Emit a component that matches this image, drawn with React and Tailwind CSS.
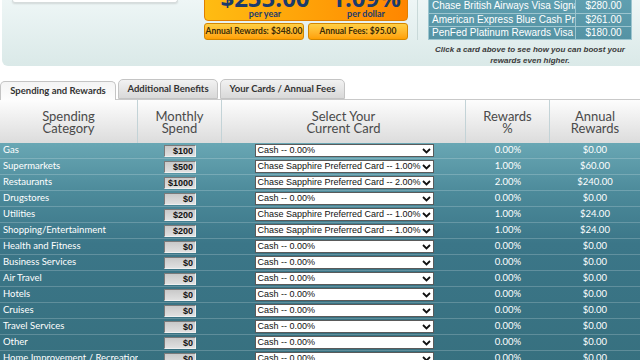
import React from "react";

const cards = [
  { name: "Chase British Airways Visa Signature", value: "$280.00" },
  { name: "American Express Blue Cash Preferred", value: "$261.00" },
  { name: "PenFed Platinum Rewards Visa Signature", value: "$180.00" },
];

const CSP1 = "Chase Sapphire Preferred Card -- 1.00%";
const CASH = "Cash -- 0.00%";

const rows = [
  { cat: "Gas", spend: "$100", card: CASH, pct: "0.00%", amt: "$0.00" },
  { cat: "Supermarkets", spend: "$500", card: CSP1, pct: "1.00%", amt: "$60.00" },
  { cat: "Restaurants", spend: "$1000", card: "Chase Sapphire Preferred Card -- 2.00%", pct: "2.00%", amt: "$240.00" },
  { cat: "Drugstores", spend: "$0", card: CASH, pct: "0.00%", amt: "$0.00" },
  { cat: "Utilities", spend: "$200", card: CSP1, pct: "1.00%", amt: "$24.00" },
  { cat: "Shopping/Entertainment", spend: "$200", card: CSP1, pct: "1.00%", amt: "$24.00" },
  { cat: "Health and Fitness", spend: "$0", card: CASH, pct: "0.00%", amt: "$0.00" },
  { cat: "Business Services", spend: "$0", card: CASH, pct: "0.00%", amt: "$0.00" },
  { cat: "Air Travel", spend: "$0", card: CASH, pct: "0.00%", amt: "$0.00" },
  { cat: "Hotels", spend: "$0", card: CASH, pct: "0.00%", amt: "$0.00" },
  { cat: "Cruises", spend: "$0", card: CASH, pct: "0.00%", amt: "$0.00" },
  { cat: "Travel Services", spend: "$0", card: CASH, pct: "0.00%", amt: "$0.00" },
  { cat: "Other", spend: "$0", card: CASH, pct: "0.00%", amt: "$0.00" },
  { cat: "Home Improvement / Recreation", spend: "$0", card: CASH, pct: "0.00%", amt: "$0.00" },
];

const Chevron = () => (
  <svg width="9" height="6" viewBox="0 0 9 6" className="shrink-0">
    <path d="M1 1 L4.5 4.5 L8 1" fill="none" stroke="#111" strokeWidth="1.8" />
  </svg>
);

const TopPanel = () => (
  <div className="ml-[2px] h-[66px] rounded-bl-[6px] bg-gradient-to-b from-[#eef6f6] to-[#dae9e8] flex">
    <div className="w-[202px] shrink-0">
      <div className="ml-[10px] w-[166px] h-[3px] bg-white border-x border-b border-[#d6dcdc] rounded-b-[4px] shadow-[0_1px_2px_rgba(0,0,0,0.12)]" />
    </div>

    <div className="w-[204px] shrink-0 flex flex-col">
      <div className="-mt-[20px] h-[41px] pt-[5px] rounded-b-[4px] border border-[#e07f00] bg-gradient-to-r from-[#ffbc12] via-[#ffa208] to-[#ff8600] flex text-[#1b3b6c] font-bold overflow-hidden">
        <div className="w-[120px] flex flex-col items-center">
          <div className="text-[24px] leading-[24px] font-['Open_Sans',sans-serif]">$255.00</div>
          <div className="text-[9px] leading-[10px] -mt-[1px]">per year</div>
        </div>
        <div className="flex-1 flex flex-col items-center">
          <div className="text-[24px] leading-[24px] font-['Open_Sans',sans-serif]">1.09%</div>
          <div className="text-[9px] leading-[10px] -mt-[1px]">per dollar</div>
        </div>
      </div>
      <div className="mt-[2px] flex gap-[4px]">
        <div className="w-[100px] h-[17px] rounded-[3px] border border-[#d48600] bg-gradient-to-b from-[#ffd044] to-[#ffa000] flex items-center justify-center whitespace-nowrap text-[8.5px] font-bold text-[#3a2a05]">
          Annual Rewards: $348.00
        </div>
        <div className="w-[100px] h-[17px] rounded-[3px] border border-[#d48600] bg-gradient-to-b from-[#ffd044] to-[#ffa000] flex items-center justify-center whitespace-nowrap text-[8.5px] font-bold text-[#3a2a05]">
          Annual Fees: $95.00
        </div>
      </div>
    </div>

    <div className="w-[10px] shrink-0 flex justify-end">
      <div className="w-px h-[40px] bg-[#c9d9d9]" />
    </div>

    <div className="ml-[10px] w-[204px] shrink-0 flex flex-col">
      <div className="-mt-[1px] border border-[#9cc5cf] bg-gradient-to-b from-[#5f9fb0] to-[#5593a4] font-['Liberation_Sans',sans-serif] text-[10px] text-white">
        {cards.map((c, i) => (
          <div key={c.name} className={`flex h-[13px] ${i > 0 ? "border-t border-[#9cc5cf]" : ""}`}>
            <div className="w-[147px] pl-[3px] leading-[12px] whitespace-nowrap overflow-hidden border-r border-[#9cc5cf]">
              {c.name}
            </div>
            <div className="flex-1 text-center leading-[12px]">{c.value}</div>
          </div>
        ))}
      </div>
      <div className="mt-[4px] text-center whitespace-nowrap font-['Liberation_Sans',sans-serif] text-[8px] leading-[11px] font-bold italic text-[#3a3a3a]">
        Click a card above to see how you can boost your
        <br />
        rewards even higher.
      </div>
    </div>
  </div>
);

const Tabs = () => (
  <div className="mt-[14px] h-[20px] flex items-end gap-[2px] border-b border-[#c9c9c9]">
    <div className="relative -mb-px w-[116px] h-[19px] rounded-t-[5px] border border-b-0 border-[#c4c4c4] bg-gradient-to-b from-[#f4f4f4] to-[#fdfdfd] flex items-center justify-center whitespace-nowrap text-[9.5px] font-bold text-[#333]">
      Spending and Rewards
    </div>
    <div className="w-[100px] h-[20px] rounded-t-[5px] border border-[#c4c4c4] bg-gradient-to-b from-[#f2f2f2] to-[#d9d9d9] flex items-center justify-center whitespace-nowrap text-[9.5px] font-bold text-[#333]">
      Additional Benefits
    </div>
    <div className="w-[125px] h-[20px] rounded-t-[5px] border border-[#c4c4c4] bg-gradient-to-b from-[#f2f2f2] to-[#d9d9d9] flex items-center justify-center whitespace-nowrap text-[9.5px] font-bold text-[#333]">
      Your Cards / Annual Fees
    </div>
  </div>
);

const Header = () => (
  <div className="h-[43px] flex bg-gradient-to-b from-[#fdfdfd] to-[#dcdcdc] text-[13px] leading-[12px] text-[#4a4a4a] text-center">
    <div className="w-[138px] flex items-center justify-center border-r border-[#c3d3d7]">Spending<br />Category</div>
    <div className="w-[84px] flex items-center justify-center border-r border-[#c3d3d7]">Monthly<br />Spend</div>
    <div className="w-[244px] flex items-center justify-center border-r border-[#c3d3d7]">Select Your<br />Current Card</div>
    <div className="w-[84px] flex items-center justify-center border-r border-[#c3d3d7]">Rewards<br />%</div>
    <div className="flex-1 flex items-center justify-center">Annual<br />Rewards</div>
  </div>
);

const Row = ({ r }) => (
  <div className="h-[16px] flex items-center border-b border-[#ffffff]/20 text-white text-[9.5px]">
    <div className="w-[138px] pl-[3px] whitespace-nowrap overflow-hidden">{r.cat}</div>
    <div className="w-[84px] flex justify-center">
      <input
        readOnly
        value={r.spend}
        className="w-[32px] h-[12px] bg-gradient-to-b from-[#c9c9c9] to-[#e0e0e0] border border-t-[#7a7a7a] border-l-[#7a7a7a] border-b-[#f0f0f0] border-r-[#f0f0f0] text-right pr-[2px] text-[9px] leading-[10px] font-bold text-[#111] font-['Liberation_Sans',sans-serif] outline-none"
      />
    </div>
    <div className="w-[244px] flex justify-center">
      <div className="w-[179px] h-[13px] bg-white border border-[#5a5a5a] flex items-center justify-between pl-[2px] pr-[2px] font-['Liberation_Sans',sans-serif] text-[9px] text-[#111]">
        <span className="whitespace-nowrap leading-[11px]">{r.card}</span>
        <Chevron />
      </div>
    </div>
    <div className="w-[84px] text-center text-[9.5px]">{r.pct}</div>
    <div className="flex-1 text-center text-[9.5px]">{r.amt}</div>
  </div>
);

export default function App() {
  return (
    <div className="w-[640px] h-[360px] overflow-hidden bg-white font-['Lato',sans-serif]">
      <TopPanel />
      <Tabs />
      <Header />
      <div className="bg-[linear-gradient(#69a7b4,#4c8a9a_22%,#3b7688_45%,#37707f)]">
        {rows.map((r) => (
          <Row key={r.cat} r={r} />
        ))}
      </div>
    </div>
  );
}
